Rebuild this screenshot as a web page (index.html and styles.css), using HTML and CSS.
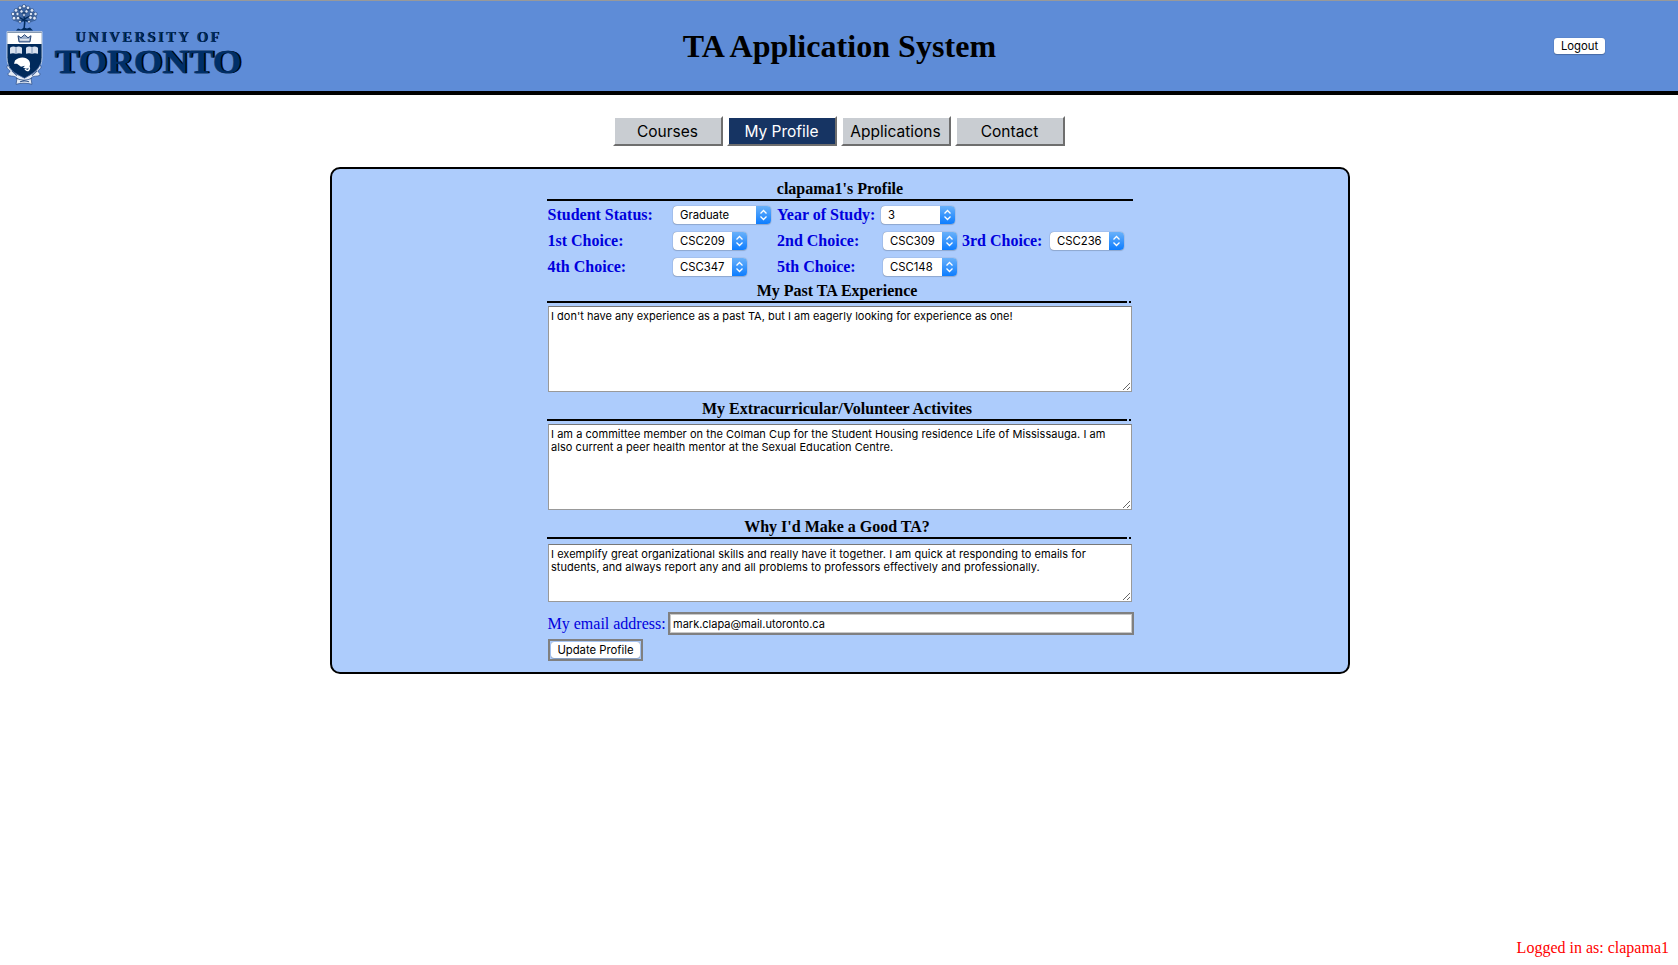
FILE: index.html
```html
<!DOCTYPE html>
<html lang="en">
<head>
<meta charset="utf-8">
<title>TA Application System</title>
<link rel="stylesheet" href="styles.css">
</head>
<body>
<header class="header">
  <svg class="logo" width="260" height="90" viewBox="0 0 260 90">
    <g class="crest" transform="translate(0 -.5) scale(1 1.035)">
      <path d="M13 20l-1-6 3-4 4-3 5-2 5 2 5 4 3 4-1 5-5 2-3-1-3 1-3-1-4 1z" fill="#365c94" opacity=".75"/>
      <path d="M24 29c1-5 1-9 0-13M24 20l-7-4M24 19l8-4M24 14l-5-5M24 14l5-5M24 20l-5 2M25 20l5 2" fill="none" stroke="#002a5c" stroke-width="1.400"/>
      <g fill="#dfe8f6" stroke="#1a3e76" stroke-width=".6">
        <circle cx="14" cy="18" r="1.800"/><circle cx="13" cy="14" r="1.700"/><circle cx="16" cy="10.500" r="1.800"/><circle cx="20" cy="8" r="1.700"/><circle cx="24" cy="6.500" r="1.700"/><circle cx="28" cy="8" r="1.700"/><circle cx="32" cy="10.500" r="1.800"/><circle cx="35.500" cy="14" r="1.700"/><circle cx="34.500" cy="18" r="1.800"/><circle cx="30.500" cy="17.500" r="1.700"/><circle cx="18" cy="18" r="1.700"/><circle cx="17.500" cy="14" r="1.600"/><circle cx="21.500" cy="11.500" r="1.600"/><circle cx="26.500" cy="11.500" r="1.600"/><circle cx="31" cy="14" r="1.600"/><circle cx="24" cy="15" r="1.400"/><circle cx="20" cy="21.500" r="1.300"/><circle cx="29" cy="21.500" r="1.300"/>
      </g>
      <path d="M16 30l2-2 3 1 3-2 3 1 3-1 3 3z" fill="#002a5c"/>
      <path d="M7 31h35v25c0 11-7 17-17.500 21C14 73 7 67 7 56z" fill="#002a5c" stroke="#e8effa" stroke-width=".7"/>
      <path d="M7.300 32h34.400v11H7.300z" fill="#fff"/>
      <path d="M18 35l3 2 3.500-3 3.500 3 3-2-1 6H19z" fill="#9fb1cc" stroke="#17386c" stroke-width=".9"/>
      <path d="M20 39h9" stroke="#fff"/>
      <path d="M10 46.500q3-2 6-.5 3-1.500 6 .5v6q-3-1-6 0-3-1-6 0zM26 46.500q3-2 6-.5 3-1.500 6 .5v6q-3-1-6 0-3-1-6 0z" fill="#d7e0ee"/>
      <path d="M16 46v6M32 46v6" fill="none" stroke="#6982aa" stroke-width=".8"/>
      <path d="M15 59c4-4 11-4 14 0 2 3 1 7-2 8l-4-1 2-2-4 1-4-3-3 0z" fill="#fff"/>
      <path d="M25 67c3 4 6 0 3-3" fill="none" stroke="#fff" stroke-width="1.500"/>
      <path d="M8 63c-3 4 1 4 2 6 0 2-3 2-2 4 3 2 6 0 9 3l-1 6c5-1.500 11-1.500 16 0l-1-6c3-3 6-1 9-3 1-2-2-2-2-4 1-2 5-2 2-6-2 5-6 8-15.500 13C14 71 10 68 8 63z" fill="#e4ebf6" stroke="#40619a" stroke-width=".9"/>
      <path d="M20 79.500q5-1.500 9 0M12 69l5 4.500M37 69l-5 4.500M16 76q8 4 16 0" fill="none" stroke="#36578c"/>
    </g>
    <g class="wordmark">
      <text class="word-shadow" x="75.800" y="42.200" font-size="14.500" textLength="144">UNIVERSITY OF</text>
      <text class="word-face" x="75" y="41.600" font-size="14.500" textLength="144">UNIVERSITY OF</text>
      <text class="word-shadow heavy" x="56" y="73.300" font-size="33.500" textLength="187" lengthAdjust="spacingAndGlyphs">TORONTO</text>
      <text class="word-face heavy" x="54.500" y="72.800" font-size="33.500" textLength="187" lengthAdjust="spacingAndGlyphs">TORONTO</text>
    </g>
  </svg>
  <h1 class="title">TA Application System</h1>
  <div class="session"><button class="push logout">Logout</button></div>
</header>

<nav class="tabs">
  <button class="tab">Courses</button>
  <button class="tab active">My Profile</button>
  <button class="tab">Applications</button>
  <button class="tab">Contact</button>
</nav>

<main class="panel">
  <form class="profile">
    <h2 class="heading first">clapama1's Profile</h2>
    <div class="row">
      <label class="c1">Student Status:</label><span class="pick wide"><span>Graduate</span><svg class="arrows" viewBox="0 0 15 18"><path d="M4.500 7.500l3-3 3 3M4.500 10.500l3 3 3-3"/></svg></span>
      <label class="c2 near">Year of Study:</label><span class="pick"><span>3</span><svg class="arrows" viewBox="0 0 15 18"><path d="M4.500 7.500l3-3 3 3M4.500 10.500l3 3 3-3"/></svg></span>
    </div>
    <div class="row">
      <label class="c1">1st Choice:</label><span class="pick mid"><span>CSC209</span><svg class="arrows" viewBox="0 0 15 18"><path d="M4.500 7.500l3-3 3 3M4.500 10.500l3 3 3-3"/></svg></span>
      <label class="c2">2nd Choice:</label><span class="pick"><span>CSC309</span><svg class="arrows" viewBox="0 0 15 18"><path d="M4.500 7.500l3-3 3 3M4.500 10.500l3 3 3-3"/></svg></span>
      <label class="c3">3rd Choice:</label><span class="pick"><span>CSC236</span><svg class="arrows" viewBox="0 0 15 18"><path d="M4.500 7.500l3-3 3 3M4.500 10.500l3 3 3-3"/></svg></span>
    </div>
    <div class="row">
      <label class="c1">4th Choice:</label><span class="pick mid"><span>CSC347</span><svg class="arrows" viewBox="0 0 15 18"><path d="M4.500 7.500l3-3 3 3M4.500 10.500l3 3 3-3"/></svg></span>
      <label class="c2">5th Choice:</label><span class="pick"><span>CSC148</span><svg class="arrows" viewBox="0 0 15 18"><path d="M4.500 7.500l3-3 3 3M4.500 10.500l3 3 3-3"/></svg></span>
    </div>
    <h2 class="heading split tight">My Past TA Experience</h2>
    <textarea class="essay first-essay">I don't have any experience as a past TA, but I am eagerly looking for experience as one!</textarea>
    <h2 class="heading split">My Extracurricular/Volunteer Activites</h2>
    <textarea class="essay">I am a committee member on the Colman Cup for the Student Housing residence Life of Mississauga. I am also current a peer health mentor at the Sexual Education Centre.</textarea>
    <h2 class="heading split">Why I'd Make a Good TA?</h2>
    <textarea class="essay short">I exemplify great organizational skills and really have it together. I am quick at responding to emails for students, and always report any and all problems to professors effectively and professionally.</textarea>
    <div class="mail"><label for="email">My email address:</label><input id="email" class="email" value="mark.clapa@mail.utoronto.ca"></div>
    <div class="frame"><button type="button" class="push update">Update Profile</button></div>
  </form>
</main>
<footer class="footer">Logged in as: clapama1</footer>
</body>
</html>
```
FILE: styles.css
```css
* { box-sizing: border-box; }
body {
  margin: 0;
  height: 965px;
  display: flex;
  flex-direction: column;
  background: #fff;
  font: 16px "Liberation Serif", "Times New Roman", serif;
  overflow: hidden;
}
.header {
  height: 95px;
  flex: none;
  display: grid;
  grid-template-columns: 260px 1fr 260px;
  background: #5e8cd7;
  border-top: 1px solid #999;
  border-bottom: 4px solid #000;
}
.logo { display: block; margin-top: -1px; }
.word-face, .word-shadow { font-family: "Liberation Serif", serif; font-weight: bold; }
.word-shadow { fill: #000; }
.word-face { fill: #002f68; }
.heavy { stroke-width: .5; stroke: #000; }
.word-face.heavy { stroke: #002f68; }
.title { margin: 0; text-align: center; font-size: 32px; line-height: 37px; padding: 27px 0 0 1px; letter-spacing: .05px; }
.session { padding: 37px 73px 0 0; display: flex; justify-content: flex-end; }
.push {
  display: block;
  border: 0;
  border-radius: 3px;
  background: #fff;
  box-shadow: 0 0 1px #0006, 0 1px 1px #0003;
  padding: 0;
  height: 16px;
  font: 11.300px/16px Inter, sans-serif;
  color: #000;
}
.logout { width: 51px; }
.tabs { display: flex; justify-content: center; gap: 4px; padding: 21px 0 0 0; height: 72px; flex: none; }
.tab {
  width: 110px;
  height: 30px;
  padding: 1px 1px 0 0;
  border: 2px solid;
  border-color: #fff #6e6e6e #6e6e6e #fff;
  background: #c9cdd2;
  font: 15.500px/25px Inter, sans-serif;
  color: #000;
}
.active { background: #163463; color: #fff; }
.panel {
  width: 1020px;
  height: 507px;
  flex: none;
  margin-left: 330px;
  border: 2px solid #000;
  border-radius: 10px;
  background: #adccfc;
  padding: 10px 0 0 215px;
}
.profile { width: 587px; display: flex; flex-direction: column; }
.heading { margin: 0; font-size: 16px; line-height: 18px; text-align: center; height: 22px; width: 586px; border-bottom: 2px solid #000; }
.first { padding-top: 1px; margin-bottom: 3px; }
.split {
  border: 0;
  height: 27px;
  margin-bottom: 3px;
  padding: 6px 6px 0 0;
  background: linear-gradient(90deg, #000 580px, transparent 580px, transparent 582px, #000 582px, #000 584px, transparent 584px) 0 100% / 100% 2px no-repeat;
}
.tight { height: 21px; padding-top: 0; }
.row { display: flex; height: 26px; padding: 2px 0 0 .5px; color: #00d; font-weight: bold; line-height: 18px; }
.c1 { width: 125.500px; }
.c2 { width: 106px; }
.near { width: 104px; }
.c3 { width: 88px; margin-left: 5px; }
.pick {
  display: flex;
  justify-content: space-between;
  width: 74px;
  height: 18px;
  padding-left: 7px;
  border-radius: 4px;
  overflow: hidden;
  background: #fff;
  box-shadow: 0 0 1px #0008, 0 1px 1px #0002;
  font: 11.300px/18px Inter, sans-serif;
  color: #000;
}
.wide { width: 98px; margin-right: 6px; }
.mid { margin-right: 30px; }
.arrows { width: 15px; height: 18px; background: linear-gradient(#69b1fa, #0d7dff); fill: none; stroke: #fff; stroke-width: 1.300; }
.essay {
  display: block;
  width: 584px;
  height: 86px;
  margin: 0 0 2px 1px;
  border: 1px solid #999;
  border-top-color: #777;
  padding: 3px 14px 2px 2px;
  font: 11px/13px Inter, sans-serif;
  letter-spacing: .045px;
  color: #000;
}
.first-essay { letter-spacing: .01px; }
.short { height: 58px; margin: 2px 0 10px 1px; }
.mail { display: flex; justify-content: space-between; height: 23px; padding-left: .5px; color: #00d; line-height: 24px; }
.email {
  width: 466px;
  height: 23px;
  border: 2px solid #808080;
  box-shadow: inset 0 0 0 1px #c8c8c8;
  padding: 1px 3px;
  font: 11px/16px Inter, sans-serif;
}
.frame { width: 95px; height: 22px; margin: 4px 0 0 1px; border: 2px solid #808080; padding: 1px; }
.update { width: 89px; }
.footer { margin: auto 9px 8px 0; text-align: right; line-height: 18px; color: #f00; }
```
